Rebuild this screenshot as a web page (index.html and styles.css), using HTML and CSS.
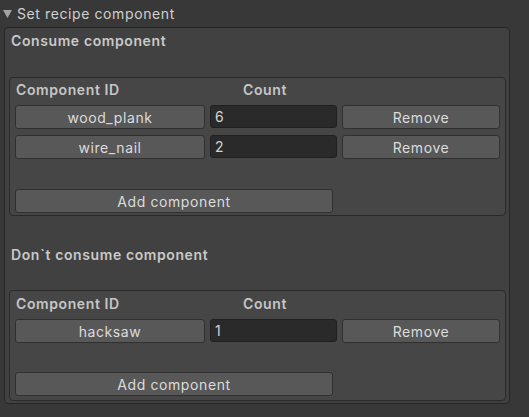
FILE: index.html
```html
<!DOCTYPE html>
<html>
<head>
<meta charset="utf-8">
<link rel="stylesheet" href="styles.css">
</head>
<body>
<div class="foldout">
  <svg class="tri" width="9" height="8" viewBox="0 0 9 8"><polygon points="0,0 9,0 4.5,8" fill="#a3a3a3"/></svg>
  <span>Set recipe component</span>
</div>
<div class="outer">
  <div class="title first">Consume component</div>
  <div class="list list-a">
    <div class="cols head">
      <div class="h-id">Component ID</div>
      <div class="h-count">Count</div>
    </div>
    <div class="cols row">
      <div class="btn">wood_plank</div>
      <div class="field">6</div>
      <div class="btn">Remove</div>
    </div>
    <div class="cols row">
      <div class="btn">wire_nail</div>
      <div class="field">2</div>
      <div class="btn">Remove</div>
    </div>
    <div class="btn add">Add component</div>
  </div>
  <div class="title second">Don`t consume component</div>
  <div class="list list-b">
    <div class="cols head">
      <div class="h-id">Component ID</div>
      <div class="h-count">Count</div>
    </div>
    <div class="cols row">
      <div class="btn">hacksaw</div>
      <div class="field">1</div>
      <div class="btn">Remove</div>
    </div>
    <div class="btn add">Add component</div>
  </div>
</div>
</body>
</html>
```

FILE: styles.css
```css
html, body {
  margin: 0;
  padding: 0;
  background: #383838;
  font-family: Inter, "Noto Sans", sans-serif;
  font-size: 14px;
  letter-spacing: 0.6px;
  color: #d2d2d2;
}
.foldout {
  height: 27px;
  display: flex;
  align-items: center;
  padding-left: 3px;
  box-sizing: border-box;
  padding-bottom: 1px;
}
.foldout .tri {
  margin-right: 5px;
  margin-top: 1px;
}
.foldout span {
  color: #d0d0d0;
}
.outer {
  margin-left: 4px;
  width: 506px;
  height: 377px;
  box-sizing: border-box;
  background: #414141;
  border: 1px solid #262626;
  border-radius: 4px;
  padding: 0 3px 0 4px;
}
.title {
  font-weight: 600;
  line-height: 20px;
  color: #c9c9c9;
  padding-left: 2px;
}
.title.first {
  padding-top: 3px;
  height: 49px;
  box-sizing: border-box;
}
.title.second {
  padding-top: 29px;
  height: 74px;
  box-sizing: border-box;
}
.list {
  background: #464646;
  border: 1px solid #2a2a2a;
  border-radius: 4px;
  padding: 2px 5px 2px 5px;
}
.list-b {
  padding-top: 3px;
  padding-bottom: 4px;
}
.cols {
  display: grid;
  grid-template-columns: 190px 127px 1fr;
  column-gap: 5px;
}
.head {
  font-weight: 600;
  line-height: 20px;
  color: #c6c6c6;
  margin-bottom: 5px;
}
.h-id {
  padding-left: 1px;
}
.h-count {
  padding-left: 33px;
}
.row {
  height: 24px;
  margin-bottom: 6px;
}
.btn {
  height: 24px;
  box-sizing: border-box;
  background: #585858;
  border: 1px solid #303030;
  border-radius: 3px;
  color: #dcdcdc;
  display: flex;
  align-items: center;
  justify-content: center;
}
.field {
  height: 23px;
  box-sizing: border-box;
  background: #2a2a2a;
  border: 1px solid #202020;
  border-radius: 3px;
  color: #d4d4d4;
  display: flex;
  align-items: center;
  padding-left: 4px;
}
.add {
  width: 318px;
  margin-top: 30px;
}
.list-b .add {
  margin-top: 29px;
}
```
